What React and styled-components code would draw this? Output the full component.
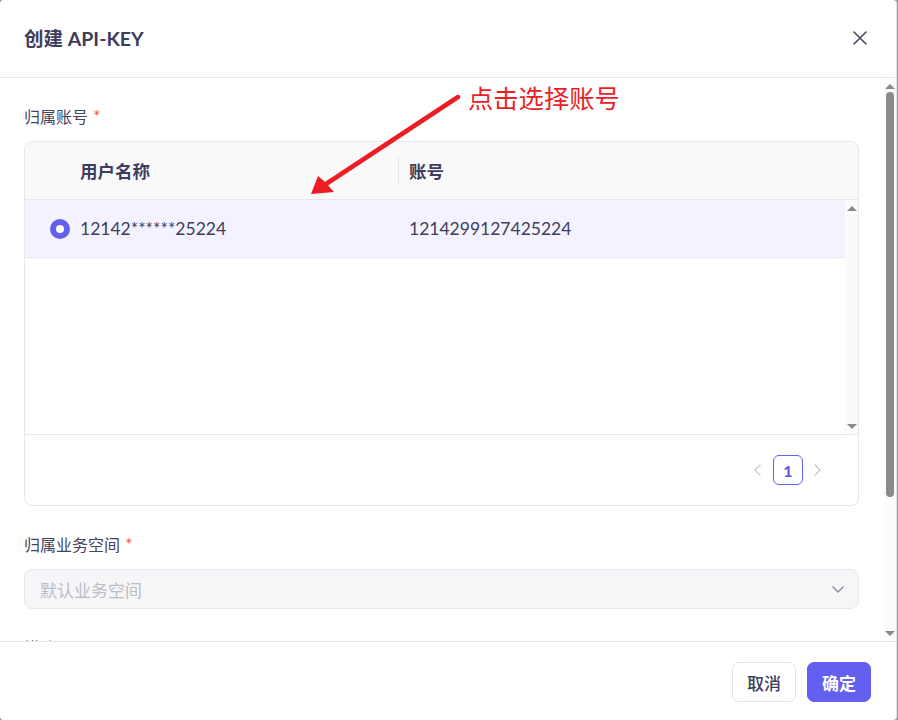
import React from 'react';
import styled, { createGlobalStyle } from 'styled-components';

const GlobalStyle = createGlobalStyle`
  html, body {
    margin: 0;
    height: 100%;
    overflow: hidden;
    background: #9d9da6;
  }
  #root {
    height: 100%;
  }
  * {
    box-sizing: border-box;
  }
`;

const FONT = `Lato, "Noto Sans CJK SC", sans-serif`;
const TEXT = '#3e3d5b';
const LINE = '#e7e7ee';
const PRIMARY = '#6360ef';
const BAR = '#8a8a8a';

const Modal = styled.div`
  position: relative;
  display: flex;
  flex-direction: column;
  width: 897px;
  height: 720px;
  background: #fff;
  border-right: 1px solid #e4e4ea;
  border-radius: 4px;
  font-family: ${FONT};
  color: ${TEXT};
  overflow: hidden;
`;

const Header = styled.div`
  display: flex;
  align-items: center;
  justify-content: space-between;
  height: 78px;
  padding: 0 28px 2px 24px;
  border-bottom: 1px solid ${LINE};
  flex-shrink: 0;
`;

const Title = styled.h2`
  margin: 0;
  font-size: 19.5px;
  font-weight: 700;
  color: ${TEXT};
`;

const CloseButton = styled.button`
  display: flex;
  padding: 0;
  border: none;
  background: none;
  color: #4a4968;
  cursor: pointer;
`;

/* scroll area with its rail drawn beside the content */
const BodyFrame = styled.div`
  flex: 1;
  min-height: 0;
  display: flex;
`;

const Body = styled.div`
  flex: 1;
  min-width: 0;
  overflow: hidden;
  padding: 29px 25px 24px 24px;
`;

const Rail = styled.div`
  display: flex;
  flex-direction: column;
  align-items: center;
  justify-content: space-between;
  width: ${(p) => p.width}px;
  flex-shrink: 0;
  background: ${(p) => p.track};
  padding: 6px 0 5px;
`;

const RailArrow = styled.span`
  width: 0;
  height: 0;
  border-left: 5px solid transparent;
  border-right: 5px solid transparent;
  ${(p) => (p.down ? 'border-top' : 'border-bottom')}: 5px solid ${BAR};
`;

const Thumb = styled.span`
  width: 8px;
  height: 405px;
  margin: 3px 0 auto;
  border-radius: 4px;
  background: ${BAR};
`;

const Field = styled.div`
  margin-bottom: 29px;
`;

const Label = styled.div`
  height: 20px;
  font-size: 16px;
  line-height: 20px;
  margin-bottom: 14px;
  color: #45445f;
  &::after {
    content: ${(p) => (p.required ? "'*'" : 'none')};
    margin-left: 5px;
    font-size: 18px;
    line-height: 0;
    color: #f0535b;
  }
`;

const TableCard = styled.div`
  border: 1px solid ${LINE};
  border-radius: 8px;
  overflow: hidden;
`;

const Row = styled.div`
  display: grid;
  grid-template-columns: 373px 1fr;
  height: 58px;
  background: ${(p) => (p.head ? '#f9f9fa' : p.selected ? '#f3f2fe' : '#fff')};
  border-bottom: 1px solid ${LINE};
  font-size: 17.5px;
  font-weight: ${(p) => (p.head ? 700 : 400)};
`;

const Cell = styled.div`
  position: relative;
  display: flex;
  align-items: center;
  gap: 10px;
  padding-left: ${(p) => p.indent}px;
  &::before {
    content: ${(p) => (p.divider ? "''" : 'none')};
    position: absolute;
    left: 0;
    top: 15px;
    height: 28px;
    width: 1px;
    background: #e6e6e9;
  }
`;

const Radio = styled.span`
  display: flex;
  align-items: center;
  justify-content: center;
  width: 20px;
  height: 20px;
  border-radius: 50%;
  background: ${PRIMARY};
  &::after {
    content: '';
    width: 8px;
    height: 8px;
    border-radius: 50%;
    background: #fff;
  }
`;

const TableBody = styled.div`
  display: flex;
  height: 235px;
  border-bottom: 1px solid ${LINE};
`;

const Rows = styled.div`
  flex: 1;
  min-width: 0;
`;

const Pager = styled.div`
  display: flex;
  align-items: center;
  justify-content: flex-end;
  gap: 8px;
  height: 70px;
  padding-right: 33px;
`;

const PagerArrow = styled.span`
  display: flex;
  justify-content: center;
  width: 14px;
  color: #cacad2;
`;

const PageItem = styled.span`
  display: flex;
  align-items: center;
  justify-content: center;
  width: 30px;
  height: 30px;
  border: 1px solid ${PRIMARY};
  border-radius: 6px;
  color: #5753e6;
  font-size: 16px;
  font-weight: 700;
`;

const Select = styled.div`
  display: flex;
  align-items: center;
  justify-content: space-between;
  height: 40px;
  padding: 0 14px 0 15px;
  background: #f6f6f8;
  border: 1px solid ${LINE};
  border-radius: 8px;
  color: #bdbdc7;
  font-size: 17px;
`;

const SelectIcon = styled.span`
  display: flex;
  color: #8a8a9e;
`;

const TextArea = styled.textarea`
  display: block;
  width: 100%;
  height: 120px;
  padding: 10px 15px;
  border: 1px solid ${LINE};
  border-radius: 8px;
  font-family: ${FONT};
  font-size: 17px;
  resize: none;
  &::placeholder {
    color: #bdbdc7;
  }
`;

const Footer = styled.div`
  display: flex;
  justify-content: flex-end;
  gap: 11px;
  height: 79px;
  padding: 20px 25px 0 0;
  border-top: 1px solid ${LINE};
  flex-shrink: 0;
`;

const Button = styled.button`
  width: 64px;
  height: 40px;
  border-radius: 7px;
  font-family: ${FONT};
  font-size: 17px;
  cursor: pointer;
  border: 1px solid ${(p) => (p.primary ? PRIMARY : '#e3e3ea')};
  background: ${(p) => (p.primary ? PRIMARY : '#fff')};
  color: ${(p) => (p.primary ? '#fff' : TEXT)};
  font-weight: ${(p) => (p.primary ? 700 : 500)};
`;

const Hint = styled.div`
  position: absolute;
  left: 468px;
  top: 84px;
  font-size: 25.3px;
  line-height: 28px;
  color: #ec1d25;
  pointer-events: none;
`;

const HintArrow = styled.svg`
  position: absolute;
  left: 300px;
  top: 80px;
  pointer-events: none;
`;

const Chevron = ({ dir }) => {
  const d = {
    left: 'M8 1 3 6l5 5',
    right: 'M3 1l5 5-5 5',
    down: 'M1 4l5 5 5-5',
  }[dir];
  return (
    <svg width="12" height="12" viewBox="0 0 12 12" fill="none">
      <path d={d} stroke="currentColor" strokeWidth="1.4" strokeLinecap="round" strokeLinejoin="round" />
    </svg>
  );
};

const accounts = [{ name: '12142******25224', account: '1214299127425224' }];

const App = () => (
  <>
    <GlobalStyle />
    <Modal>
      <Header>
        <Title>创建 API-KEY</Title>
        <CloseButton aria-label="关闭">
          <svg width="16" height="16" viewBox="0 0 16 16" fill="none">
            <path d="M2 2l12 12M14 2 2 14" stroke="currentColor" strokeWidth="1.6" strokeLinecap="round" />
          </svg>
        </CloseButton>
      </Header>

      <BodyFrame>
        <Body>
          <Field>
            <Label required>归属账号</Label>
            <TableCard>
              <Row head>
                <Cell indent={55}>用户名称</Cell>
                <Cell indent={11} divider>账号</Cell>
              </Row>
              <TableBody>
                <Rows>
                  {accounts.map((a) => (
                    <Row key={a.account} selected>
                      <Cell indent={25}>
                        <Radio />
                        {a.name}
                      </Cell>
                      <Cell indent={11}>{a.account}</Cell>
                    </Row>
                  ))}
                </Rows>
                <Rail width={13} track="#fafafa">
                  <RailArrow />
                  <RailArrow down />
                </Rail>
              </TableBody>
              <Pager>
                <PagerArrow><Chevron dir="left" /></PagerArrow>
                <PageItem>1</PageItem>
                <PagerArrow><Chevron dir="right" /></PagerArrow>
              </Pager>
            </TableCard>
          </Field>

          <Field>
            <Label required>归属业务空间</Label>
            <Select>
              默认业务空间
              <SelectIcon><Chevron dir="down" /></SelectIcon>
            </Select>
          </Field>

          <Field>
            <Label>描述</Label>
            <TextArea placeholder="请输入描述" />
          </Field>
        </Body>
        <Rail width={12} track="#fbfbfb">
          <RailArrow />
          <Thumb />
          <RailArrow down />
        </Rail>
      </BodyFrame>

      <Footer>
        <Button>取消</Button>
        <Button primary>确定</Button>
      </Footer>

      <HintArrow width="170" height="125" viewBox="0 0 170 125">
        <line x1="158" y1="17" x2="26" y2="104" stroke="#ec1d25" strokeWidth="4.5" strokeLinecap="round" />
        <polygon points="11,114 18,96 24,101 34,112" fill="#ec1d25" />
      </HintArrow>
      <Hint>点击选择账号</Hint>
    </Modal>
  </>
);

export default App;
